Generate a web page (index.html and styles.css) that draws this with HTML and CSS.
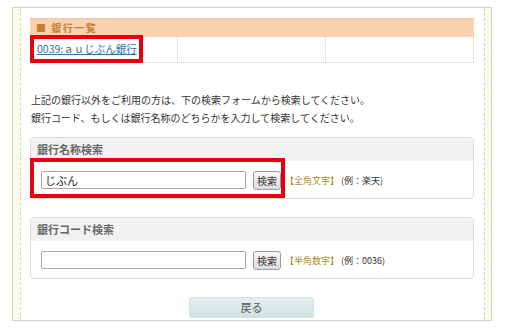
FILE: index.html
```html
<!DOCTYPE html>
<html lang="ja">
<head>
<meta charset="utf-8">
<link rel="stylesheet" href="styles.css">
</head>
<body>
<div class="frame">
  <div class="inner">
    <div class="bank-list">
      <div class="bank-head">■ 銀行一覧</div>
      <div class="bank-row">
        <div class="bank-cell"><a class="bank-link" href="#">0039:ａｕじぶん銀行</a></div>
        <div class="bank-cell"></div>
        <div class="bank-cell"></div>
      </div>
      <div class="mark mark-link"></div>
    </div>

    <p class="guide">上記の銀行以外をご利用の方は、下の検索フォームから検索してください。<br>銀行コード、もしくは銀行名称のどちらかを入力して検索してください。</p>

    <div class="search-box">
      <div class="search-head">銀行名称検索</div>
      <div class="search-body">
        <input class="search-input" type="text" value="じぶん">
        <button class="search-btn" type="button">検索</button>
        <span class="hint">【全角文字】</span><span class="example">(例：楽天)</span>
      </div>
      <div class="mark mark-search"></div>
    </div>

    <div class="search-box">
      <div class="search-head">銀行コード検索</div>
      <div class="search-body">
        <input class="search-input" type="text" value="">
        <button class="search-btn" type="button">検索</button>
        <span class="hint">【半角数字】</span><span class="example">(例：0036)</span>
      </div>
    </div>

    <div class="back-wrap">
      <button class="back-btn" type="button">戻る</button>
    </div>
  </div>
</div>
</body>
</html>
```

FILE: styles.css
```css
* { box-sizing: border-box; }
html, body { margin: 0; padding: 0; background: #fff; }
body {
  font-family: "Noto Sans CJK JP", "Noto Sans", sans-serif;
  color: #333;
  font-size: 10px;
}
.frame {
  margin: 7px 0 0 12px;
  width: 480px;
  border: 1px solid #cfcfcf;
  background: #fbfbec;
  padding: 0 6px 0 7px;
}
.inner {
  background: #fff;
  border-left: 1px dashed #d6d9ad;
  border-right: 1px dashed #d6d9ad;
  padding: 10px 10px 2px 9px;
}
.bank-list {
  position: relative;
  width: 444px;
}
.bank-head {
  height: 19px;
  background: #fad3ae;
  border-top: 1px dotted #d8c2ad;
  color: #c47f35;
  font-weight: bold;
  font-size: 10px;
  line-height: 18px;
  padding-left: 6px;
  letter-spacing: 1.5px;
}
.bank-row {
  display: grid;
  grid-template-columns: 148px 148px 148px;
  height: 26px;
  border-bottom: 1px dotted #c8c8c8;
}
.bank-cell {
  border-right: 1px dotted #cfcfcf;
  padding: 4px 0 0 7px;
  line-height: 16px;
}
.bank-link {
  color: #2a73a8;
  text-decoration: underline;
  font-size: 10.5px;
}
.mark {
  position: absolute;
  border: 4px solid #e5000f;
}
.mark-link {
  left: 0;
  top: 17px;
  width: 113px;
  height: 28px;
}
.guide {
  margin: 28px 0 10px 1px;
  font-size: 10px;
  line-height: 18px;
  color: #333;
}
.search-box {
  position: relative;
  width: 444px;
  border: 1px solid #dcdcdc;
  border-radius: 4px;
  margin-bottom: 18px;
  background: #fff;
}
.search-head {
  height: 23px;
  background: #f2f2f2;
  border-radius: 4px 4px 0 0;
  color: #666;
  font-weight: bold;
  font-size: 11px;
  line-height: 23px;
  padding-left: 6px;
}
.search-body {
  display: flex;
  align-items: center;
  padding: 10px 0 9px 10px;
  height: 37px;
}
.search-input {
  width: 205px;
  height: 18px;
  margin: 0;
  border: 1px solid #a5a5a5;
  border-radius: 2px;
  padding: 0 3px;
  font-family: "Noto Sans CJK JP", sans-serif;
  font-size: 11px;
  color: #222;
  background: #fff;
}
.search-btn {
  margin: 0 0 0 7px;
  width: 28px;
  height: 19px;
  padding: 0;
  border: 1px solid #9a9a9a;
  border-radius: 3px;
  background: linear-gradient(#f7f7f7, #dedede);
  font-family: "Noto Sans CJK JP", sans-serif;
  font-size: 10px;
  color: #333;
  line-height: 17px;
}
.hint {
  margin-left: 4px;
  color: #a88a1e;
  font-size: 9px;
}
.example {
  margin-left: 2px;
  color: #333;
  font-size: 9px;
}
.mark-search {
  left: -1px;
  top: 20px;
  width: 255px;
  height: 40px;
}
.back-wrap {
  display: flex;
  justify-content: center;
  padding-right: 1px;
}
.back-btn {
  width: 125px;
  height: 21px;
  margin: 0;
  padding: 0;
  border: 1px solid #d3e3e2;
  border-radius: 3px;
  background: linear-gradient(#e3efee, #cde1e0);
  font-family: "Noto Sans CJK JP", sans-serif;
  font-size: 11px;
  color: #555;
  line-height: 19px;
}
```
